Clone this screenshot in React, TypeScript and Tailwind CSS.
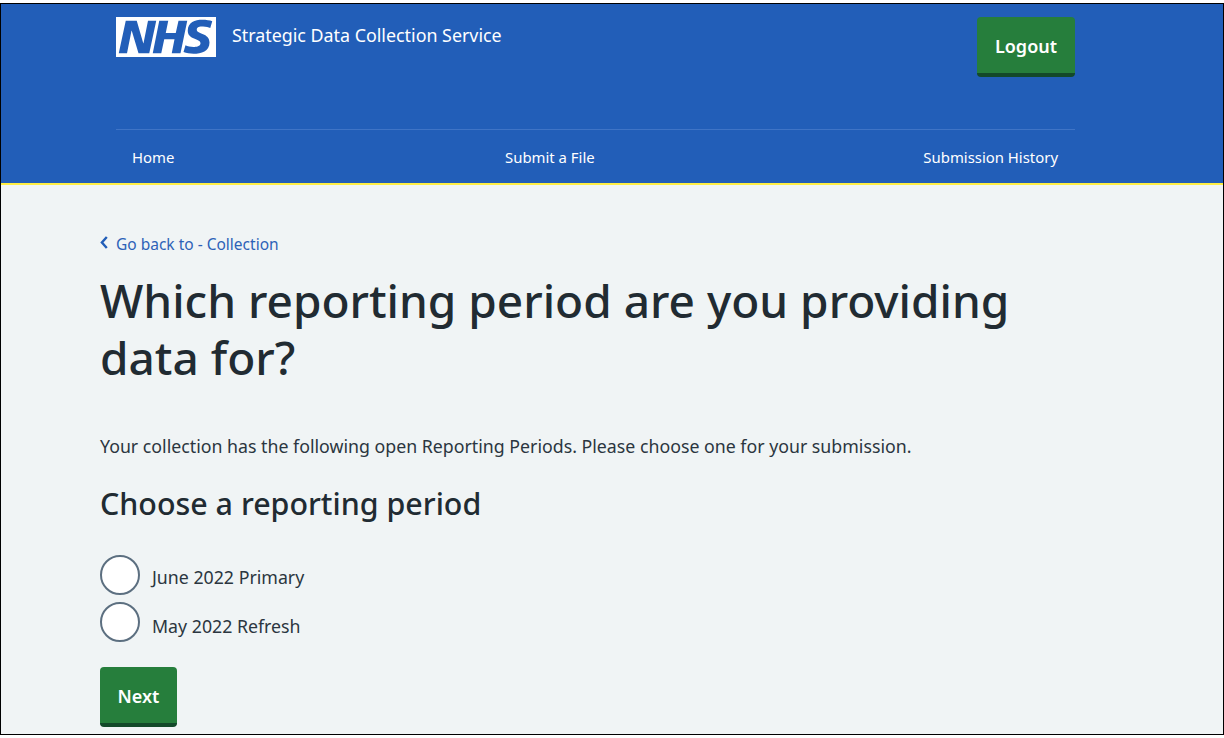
import React from 'react';

const font = "font-['Noto_Sans','Open_Sans',sans-serif]";

const NhsLogo = () => (
  <svg viewBox="0 0 40 16" className="h-10 w-[100px] shrink-0" aria-label="NHS">
    <path fill="#fff" d="M0 0h40v16H0z" />
    <path
      fill="#225eb8"
      d="M3.9 1.5h4.4l2.6 9h.1l1.8-9h3.3l-2.8 13H9l-2.7-9h-.1l-1.8 9H1.1M17.3 1.5h3.6l-1 4.9h4L25 1.5h3.5l-2.7 13h-3.5l1.1-5.6h-4.1l-1.2 5.6h-3.4M37.7 4.4c-.7-.3-1.6-.6-2.9-.6-1.4 0-2.5.2-2.5 1.3 0 1.8 5.1 1.2 5.1 5.1 0 3.6-3.3 4.5-6.4 4.5-1.3 0-2.9-.3-4-.7l.8-2.7c.7.4 2.1.7 3.2.7s2.8-.2 2.8-1.5c0-2.1-5.1-1.3-5.1-5 0-3.4 2.9-4.4 5.8-4.4 1.6 0 3.1.2 4 .6"
    />
  </svg>
);

const Header = () => (
  <header className="h-[181px] shrink-0 bg-[#225eb8] border-b-2 border-b-[#ffee44] text-white">
    <div className="ml-[115px] w-[959px]">
      <div className="flex h-[126px] items-start justify-between border-b border-[#3f74c6] pt-[13px]">
        <div className="flex items-start gap-4">
          <NhsLogo />
          <span className="text-[17.85px] leading-[36px]">Strategic Data Collection Service</span>
        </div>
        <button className="h-[60px] w-[98px] rounded-[4px] bg-[#267e3c] border-b-4 border-b-[#13492a] pt-0.5 text-[18px] font-semibold text-white">
          Logout
        </button>
      </div>
      <nav className="flex justify-between pl-4 pr-[17px] pt-[16px] text-[14.9px] leading-[22px]">
        <a>Home</a>
        <a className="pl-0.5">Submit a File</a>
        <a>Submission History</a>
      </nav>
    </div>
  </header>
);

const Radio = ({ label, textClass }: { label: string; textClass: string }) => (
  <label className="flex h-10 items-center gap-3">
    <span className="size-10 rounded-full border-2 border-[#5c6f80] bg-white" />
    <span className={`${textClass} text-[17.75px] text-[#2b3640]`}>{label}</span>
  </label>
);

export default function App() {
  return (
    <div className={`${font} h-[738px] w-[1224px] overflow-hidden bg-white pt-[3px] pb-[3px]`}>
      <div className="flex h-[732px] flex-col border border-black bg-[#f0f4f5]">
        <Header />
        <main className="pl-[99px]">
          <a className="mt-[48px] flex items-center gap-2 text-[15.5px] leading-[22px] text-[#2d62b8]">
            <svg viewBox="0 0 8 13" className="mb-1 h-[13px] w-2" fill="none" stroke="#225eb8" strokeWidth="2.4">
              <path d="M6.8 1 1.9 6.5l4.9 5.5" />
            </svg>
            Go back to - Collection
          </a>
          <h1 className="mt-[17px] w-[960px] text-[46px] font-medium leading-[57px] text-[#212b32]">
            Which reporting period are you providing data for?
          </h1>
          <p className="mt-[47px] text-[17.75px] leading-[27px] text-[#2b3640]">
            Your collection has the following open Reporting Periods. Please choose one for your submission.
          </p>
          <h2 className="mt-[24px] text-[30.4px] font-medium leading-[40px] text-[#212b32]">Choose a reporting period</h2>
          <div className="mt-[31px] flex flex-col gap-[7px]">
            <Radio label="June 2022 Primary" textClass="pt-1" />
            <Radio label="May 2022 Refresh" textClass="pt-2" />
          </div>
          <button className="mt-[25px] h-[60px] w-[77px] rounded-[4px] bg-[#267e3c] border-b-4 border-b-[#13492a] pt-0.5 text-[18px] font-semibold text-white">
            Next
          </button>
        </main>
      </div>
    </div>
  );
}
